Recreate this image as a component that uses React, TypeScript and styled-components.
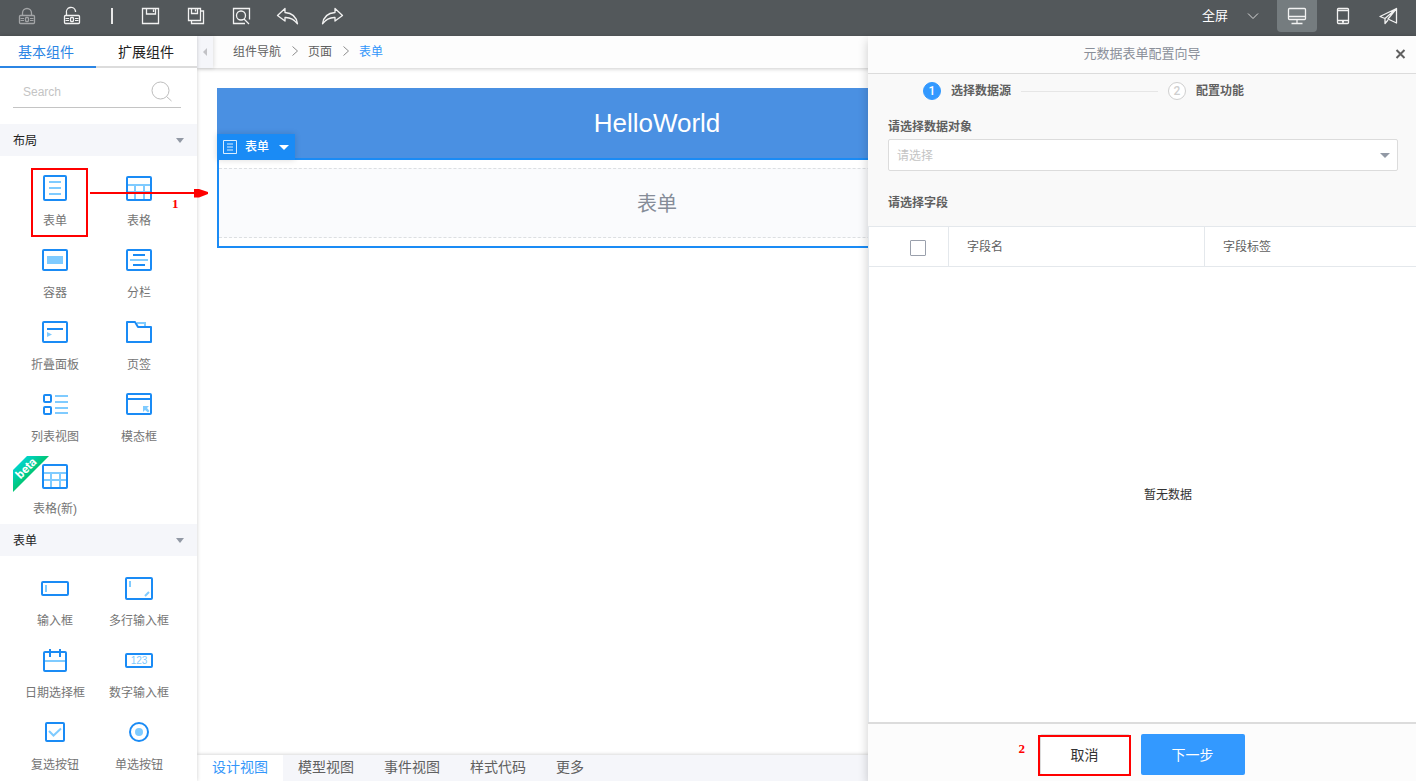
import React from "react";
import styled, { createGlobalStyle } from "styled-components";

const BLUE = "#1a8bf5";
const LIGHT = "#7fcbff";
const RED = "#ff0000";

const GlobalStyle = createGlobalStyle`
  *, *::before, *::after { box-sizing: border-box; }
  body {
    margin: 0;
    font-family: "Liberation Sans", "Noto Sans CJK SC", sans-serif;
    font-size: 12px;
    line-height: 16px;
    color: #666;
    background: #fff;
  }
  button, input, select { font: inherit; color: inherit; }
  button { border: 0; padding: 0; background: none; cursor: pointer; }
`;

const Page = styled.div`
  position: relative;
  display: flex;
  flex-direction: column;
  height: 100vh;
  overflow: hidden;
`;

/* ---------- toolbar ---------- */

const Toolbar = styled.header`
  display: flex;
  justify-content: space-between;
  flex: none;
  height: 36px;
  padding: 0 7px 4px 17px;
  background: #53585b;
  color: #fff;
`;

const ToolGroup = styled.div<{ $gap: number }>`
  display: flex;
  align-items: center;
  gap: ${(p) => p.$gap}px;
`;

const ToolButton = styled.button<{ $dim?: boolean }>`
  display: flex;
  width: 20px;
  height: 20px;
  opacity: ${(p) => (p.$dim ? 0.5 : 1)};
  svg { overflow: visible; }
`;

const ToolDivider = styled.span`
  display: flex;
  justify-content: center;
  width: 9px;
  &::before {
    content: "";
    width: 2px;
    height: 16px;
    background: #e8e8e8;
  }
`;

const DeviceButton = styled.button<{ $active?: boolean }>`
  display: flex;
  align-items: center;
  justify-content: center;
  width: 40px;
  height: 32px;
  border-radius: 0 0 4px 4px;
  background: ${(p) => (p.$active ? "#757c7f" : "transparent")};
`;

const ScreenPicker = styled.label`
  display: grid;
  align-items: center;
  width: 57px;
  margin-right: 12px;
  select, svg { grid-area: 1 / 1; }
  svg { justify-self: end; pointer-events: none; }
`;

const ScreenSelect = styled.select`
  appearance: none;
  width: 100%;
  padding: 0;
  border: 0;
  background: none;
  font-size: 13px;
  line-height: 20px;
  option { color: #333; }
`;

/* ---------- sidebar ---------- */

const Workspace = styled.div`
  position: relative;
  display: flex;
  flex: 1;
  min-height: 0;
`;

const Sidebar = styled.aside`
  position: relative;
  z-index: 1;
  flex: none;
  width: 197px;
  overflow: auto;
  scrollbar-width: none;
  background: #fff;
  box-shadow: 0 0 4px rgba(0, 0, 0, 0.2);
`;

const SideTabs = styled.div`
  display: grid;
  grid-template-columns: 96px 1fr;
`;

const SideTab = styled.button<{ $active?: boolean }>`
  height: 32px;
  padding: 2px 22px 0 18px;
  border-bottom: 2px solid ${(p) => (p.$active ? "#2b85e4" : "#dcdcdc")};
  color: ${(p) => (p.$active ? "#2b85e4" : "#222")};
  font-size: 14px;
  text-align: left;
  white-space: nowrap;
  & + & { padding: 2px 18px 0 22px; }
`;

const SearchBox = styled.label`
  display: flex;
  align-items: center;
  height: 34px;
  margin: 6px 16px 16px 13px;
  padding: 0 8px 0 10px;
  border-bottom: 1px solid #c4c4c4;
`;

const SearchInput = styled.input`
  flex: 1;
  min-width: 0;
  padding: 2px 0 0;
  border: 0;
  outline: 0;
  background: none;
  &::placeholder { color: #c4c4c4; }
`;

const SectionHead = styled.button`
  display: flex;
  align-items: center;
  justify-content: space-between;
  width: 100%;
  height: 32px;
  padding: 2px 13px 0;
  background: #f5f6fa;
  color: #222;
`;

const Caret = styled.span<{ $color: string }>`
  border: 5px solid transparent;
  border-top-color: ${(p) => p.$color};
  border-bottom-width: 0;
`;

const SectionCaret = styled(Caret)`
  border-width: 5px 4px 0;
  margin-bottom: 2px;
`;

const ItemGrid = styled.div`
  display: grid;
  grid-template-columns: 84px 84px;
  row-gap: 4px;
  padding: 12px 0 0 13px;
`;

const Item = styled.button`
  position: relative;
  display: flex;
  flex-direction: column;
  align-items: center;
  height: 68px;
  line-height: 26px;
  color: #757575;
  white-space: nowrap;
`;

const Ribbon = styled.svg`
  position: absolute;
  top: 0;
  left: 0;
  font: bold 12px/12px Roboto, sans-serif;
`;

/* ---------- editor ---------- */

const Editor = styled.main`
  display: flex;
  flex-direction: column;
  flex: 1;
  min-width: 0;
`;

const TopBar = styled.div`
  display: flex;
  height: 32px;
  flex: none;
  background: #fdfdfd;
  box-shadow: 0 1px 4px rgba(0, 0, 0, 0.2);
`;

const Collapse = styled.button`
  display: flex;
  align-items: center;
  justify-content: center;
  width: 16px;
  background: #f5f6fa;
  box-shadow: 1px 0 4px rgba(0, 0, 0, 0.12);
  &::before {
    content: "";
    border: 4px solid transparent;
    border-right-color: #c2c2c6;
    border-left-width: 0;
  }
`;

const Crumbs = styled.nav`
  display: flex;
  align-items: center;
  padding: 0 20px;
`;

const Crumb = styled.a<{ $current?: boolean }>`
  color: ${(p) => (p.$current ? "#3296fa" : "#606060")};
  text-decoration: none;
`;

const CrumbArrow = styled.svg`
  margin: 0 9px 2px 10px;
`;

const Canvas = styled.div`
  flex: 1;
  min-height: 0;
  margin-right: 299px;
  padding: 20px;
`;

const Hero = styled.h1`
  margin: 0;
  font-size: 26px;
  font-weight: 400;
  line-height: 70px;
  text-align: center;
  color: #fff;
  background: #4a90e2;
`;

const FormBlock = styled.section`
  position: relative;
  padding: 8px 0;
  border: 2px solid ${BLUE};
`;

const FormTag = styled.button`
  position: absolute;
  left: -2px;
  bottom: 100%;
  display: flex;
  align-items: center;
  width: 78px;
  height: 26px;
  padding-left: 6px;
  background: ${BLUE};
  color: #fff;
  font-weight: 500;
  box-shadow: 0 0 6px rgba(0, 0, 0, 0.15);
  svg { margin-right: 8px; }
  ${Caret} { margin-left: 10px; }
`;

const FormBody = styled.div`
  height: 70px;
  border: dashed #dcdfe2;
  border-width: 1px 0;
  background: #fafbfd;
  font-size: 20px;
  line-height: 70px;
  text-align: center;
  color: #858c98;
`;

const ViewTabs = styled.div`
  display: flex;
  flex: none;
  height: 26px;
  background: #f5f6fa;
  box-shadow: 0 -1px 3px rgba(0, 0, 0, 0.15);
`;

const ViewTab = styled.button<{ $active?: boolean }>`
  padding: 0 15px 2px;
  background: ${(p) => (p.$active ? "#fff" : "transparent")};
  color: ${(p) => (p.$active ? "#3296fa" : "#606060")};
  font-size: 14px;
`;

/* ---------- wizard drawer ---------- */

const Drawer = styled.section`
  position: absolute;
  z-index: 2;
  top: 0;
  right: 0;
  bottom: 0;
  display: flex;
  flex-direction: column;
  width: 548px;
  background: #f9f9f9;
  box-shadow: 0 4px 10px rgba(0, 0, 0, 0.2);
`;

const DrawerHead = styled.div`
  display: grid;
  grid-template-columns: 1fr auto 1fr;
  align-items: center;
  height: 38px;
  padding: 0 10px 2px;
  border-bottom: 1px solid #dcdcdc;
  background: #fcfcfc;
`;

const DrawerTitle = styled.h2`
  grid-column: 2;
  margin: 0;
  font-size: 13px;
  font-weight: 400;
  color: #8a8f99;
`;

const CloseButton = styled.button`
  display: flex;
  justify-self: end;
`;

const Steps = styled.ol`
  display: flex;
  align-items: center;
  height: 34px;
  margin: 0;
  padding: 0 55px;
  list-style: none;
`;

const Step = styled.li`
  display: flex;
  align-items: center;
  gap: 10px;
  font-weight: 700;
  color: #606060;
`;

const StepDot = styled.span<{ $active?: boolean }>`
  width: 18px;
  height: 18px;
  border: 1px solid ${(p) => (p.$active ? "#3399ff" : "#cfcfcf")};
  border-radius: 50%;
  background: ${(p) => (p.$active ? "#3399ff" : "#fff")};
  color: ${(p) => (p.$active ? "#fff" : "#cfcfcf")};
  font: 500 12px/16px Roboto, sans-serif;
  text-align: center;
`;

const StepLine = styled.li`
  width: 137px;
  height: 1px;
  margin: 0 10px;
  background: #e6e6e6;
`;

const Field = styled.label`
  display: grid;
  align-items: center;
  row-gap: 4px;
  padding: 11px 18px 0 20px;
  select { grid-area: 2 / 1; }
  ${Caret} { grid-area: 2 / 1; justify-self: end; margin-right: 8px; pointer-events: none; }
`;

const FieldLabel = styled.span`
  font-weight: 700;
  color: #606060;
`;

const FieldSelect = styled.select`
  appearance: none;
  width: 100%;
  height: 32px;
  padding: 2px 8px 0;
  border: 1px solid #dcdcdc;
  border-radius: 2px;
  background: #fff;
  color: #c4c4c4;
`;

const FieldsTitle = styled.h3`
  margin: 0;
  padding: 24px 20px 15px;
  font-size: 12px;
  color: #606060;
`;

const TableArea = styled.div`
  display: flex;
  flex-direction: column;
  flex: 1;
  min-height: 0;
  overflow: hidden;
  border: 1px solid #e4e8ec;
  border-width: 1px 0 0 1px;
  background: #fff;
`;

const FieldTable = styled.table`
  flex: none;
  width: 600px;
  table-layout: fixed;
  border-collapse: separate;
  border-spacing: 0;
`;

const HeadCell = styled.th<{ $width: number }>`
  width: ${(p) => p.$width}px;
  height: 40px;
  padding: 0 18px;
  border: 1px solid #e4e8ec;
  border-width: 0 1px 1px 0;
  font-weight: 400;
  text-align: left;
  color: #606060;
`;

const CheckCell = styled(HeadCell)`
  padding: 2px 0 0 18px;
  text-align: center;
`;

const CheckBox = styled.input`
  appearance: none;
  display: inline-block;
  width: 16px;
  height: 16px;
  margin: 0;
  border: 1px solid #9aa0ac;
  border-radius: 1px;
  background: #fff;
  vertical-align: middle;
`;

const Empty = styled.p`
  display: flex;
  flex: 1;
  align-items: center;
  justify-content: center;
  width: 598px;
  margin: 0;
  color: #333;
`;

const DrawerFoot = styled.footer`
  display: flex;
  justify-content: center;
  gap: 11px;
  flex: none;
  height: 59px;
  padding-top: 10px;
  border-top: 2px solid #dcdcdc;
  background: #fcfcfc;
`;

const FootButton = styled.button<{ $primary?: boolean }>`
  position: relative;
  height: 41px;
  padding: 0 ${(p) => (p.$primary ? 31 : 30)}px;
  border: ${(p) => (p.$primary ? "0" : "1px solid #dcdcdc")};
  border-radius: 2px;
  background: ${(p) => (p.$primary ? "#3399ff" : "#fff")};
  color: ${(p) => (p.$primary ? "#fff" : "#333")};
  font-size: 14px;
`;

/* ---------- walkthrough marks ---------- */

const MarkBox = styled.span<{ $top: number; $left: number; $w: number; $h: number }>`
  position: absolute;
  top: ${(p) => p.$top}px;
  left: ${(p) => p.$left}px;
  width: ${(p) => p.$w}px;
  height: ${(p) => p.$h}px;
  border: 2px solid ${RED};
`;

const MarkNumber = styled.span<{ $top: number; $left: number }>`
  position: absolute;
  z-index: 3;
  top: ${(p) => p.$top}px;
  left: ${(p) => p.$left}px;
  font: bold 13px/16px "Liberation Serif", serif;
  color: ${RED};
`;

const MarkArrow = styled.svg`
  position: absolute;
  z-index: 3;
  top: 151px;
  left: 89px;
  pointer-events: none;
`;

/* ---------- icons ---------- */

const icons: Record<string, React.ReactNode> = {
  form: (
    <>
      <rect x="9" y="8" width="22" height="24" rx="1" />
      <path stroke={LIGHT} d="M14 14h12M14 20h12M14 26h12" />
    </>
  ),
  table: (
    <>
      <path stroke={LIGHT} d="M9 17h22M9 24h22M16 17v14M25 17v14" />
      <rect x="8" y="9" width="24" height="23" rx="1" />
    </>
  ),
  container: (
    <>
      <rect x="8" y="10" width="24" height="20" rx="1" />
      <path fill={LIGHT} stroke="none" d="M12 16h16v8H12z" />
    </>
  ),
  columns: (
    <>
      <rect x="8" y="10" width="24" height="20" rx="1" />
      <path d="M14 15h12M14 25h12" />
      <path stroke={LIGHT} d="M11 20h18" />
    </>
  ),
  collapse: (
    <>
      <rect x="8" y="10" width="24" height="20" rx="1" />
      <path d="M12 17h16" />
      <path fill={LIGHT} stroke="none" d="M12 20l5 2.500l-5 2.500z" />
    </>
  ),
  tabs: (
    <>
      <path stroke={LIGHT} d="M18 11h8v4" />
      <path strokeLinejoin="round" d="M8 10h8l3 5h13v15H8z" />
    </>
  ),
  list: (
    <>
      <rect x="9" y="11" width="7" height="7" rx="1" />
      <rect x="9" y="23" width="7" height="7" rx="1" />
      <path stroke={LIGHT} d="M20 12h13M20 18h13M20 24h13M20 29h13" />
    </>
  ),
  modal: (
    <>
      <rect x="8" y="10" width="24" height="20" rx="1" />
      <path d="M8 15h24" />
      <path fill={LIGHT} stroke="none" d="M24 22h6l-2 2l2.500 3l-1.500 1.500l-3-2.500l-2 2z" />
    </>
  ),
  input: (
    <>
      <rect x="7" y="14" width="26" height="13" rx="1" />
      <path stroke={LIGHT} d="M11 17v7" />
    </>
  ),
  textarea: (
    <>
      <rect x="7" y="10" width="26" height="21" rx="1" />
      <path stroke={LIGHT} d="M11 13v6M26 28l4-4" />
    </>
  ),
  date: (
    <>
      <path stroke={LIGHT} d="M10 21h20" />
      <rect x="9" y="12" width="22" height="19" rx="1" />
      <path d="M15 9v8M25 9v8" />
    </>
  ),
  number: (
    <>
      <rect x="7" y="14" width="26" height="13" rx="1" />
      <text x="20" y="24" fontSize="10" textAnchor="middle" fill={LIGHT} stroke="none">
        123
      </text>
    </>
  ),
  checkbox: (
    <>
      <rect x="11" y="11" width="18" height="18" rx="1" />
      <path stroke={LIGHT} d="M14 19l4.500 4.500l7.500-7" />
    </>
  ),
  radio: (
    <>
      <circle cx="20" cy="20" r="9" />
      <circle cx="20" cy="20" r="4" fill={LIGHT} stroke="none" />
    </>
  ),
};

const ItemIcon = ({ name }: { name: string }) => (
  <svg width="40" height="40" fill="none" stroke={BLUE} strokeWidth="2" aria-hidden="true">
    {icons[name]}
  </svg>
);

const ToolIcon = ({ width = 20, children }: { width?: number; children: React.ReactNode }) => (
  <svg width={width} height="20" fill="none" stroke="#f2f2f2" strokeWidth="1.300" aria-hidden="true">
    {children}
  </svg>
);

const lockBody = (
  <>
    <rect x="2.500" y="9.500" width="15" height="8" rx="1" />
    <path d="M3.500 12.500h3.500M3.500 14.500h3.500M13 12.500h3.500M13 14.500h3.500" strokeWidth="1" />
    <rect x="8.500" y="11.500" width="3" height="4" rx="1" />
  </>
);

const tools = [
  { label: "锁定", dim: true, art: <>{lockBody}<path d="M5.500 9.500V7a4.500 4.500 0 0 1 9 0v2.500" /></> },
  { label: "解锁", art: <>{lockBody}<path d="M4.500 9.500V7a4.500 4.500 0 0 1 9-2v1" /></> },
  null,
  { label: "保存", art: <path d="M1.500 2.500h16v15h-16zM5.500 2.500v5.500h9V2.500M12.500 3.500v2.500" /> },
  {
    label: "全部保存",
    art: <path d="M2.500 2.500h12v12h-12zM5.500 2.500v5h6v-5M9.500 3.500v2M14.500 5h3v12.500h-12v-3" />,
  },
  {
    label: "预览",
    art: <><path d="M14 17.500h-11.500v-15h16v11" /><circle cx="10" cy="9.500" r="4.500" /><path d="M13 13l5 5" /></>,
  },
  {
    label: "撤销",
    art: <path strokeLinejoin="round" d="M9 2.500L1.500 9.500L9 15v-3.500c5-.2 9 1.500 12.500 6.300C20.500 11 16 7 9 6.500z" />,
  },
  {
    label: "重做",
    art: <path strokeLinejoin="round" d="M14 2.500L21.500 9.500L14 15v-3.500c-5-.2-9 1.500-12.500 6.300C2.500 11 7 7 14 6.500z" />,
  },
];

const layoutItems = [
  { icon: "form", label: "表单", marked: true },
  { icon: "table", label: "表格" },
  { icon: "container", label: "容器" },
  { icon: "columns", label: "分栏" },
  { icon: "collapse", label: "折叠面板" },
  { icon: "tabs", label: "页签" },
  { icon: "list", label: "列表视图" },
  { icon: "modal", label: "模态框" },
  { icon: "table", label: "表格(新)", beta: true },
];

const formItems = [
  { icon: "input", label: "输入框" },
  { icon: "textarea", label: "多行输入框" },
  { icon: "date", label: "日期选择框" },
  { icon: "number", label: "数字输入框" },
  { icon: "checkbox", label: "复选按钮" },
  { icon: "radio", label: "单选按钮" },
];

type Entry = { icon: string; label: string; marked?: boolean; beta?: boolean };

const Section = ({ title, items }: { title: string; items: Entry[] }) => (
  <section>
    <SectionHead>
      {title}
      <SectionCaret $color="#9299a5" />
    </SectionHead>
    <ItemGrid>
      {items.map((item) => (
        <Item key={item.label}>
          <ItemIcon name={item.icon} />
          {item.label}
          {item.beta && (
            <Ribbon width="36" height="36">
              <defs>
                <linearGradient id="ribbon" x1="0" y1="0" x2="1" y2="1">
                  <stop offset="0.150" stopColor="#00d5d5" />
                  <stop offset="0.550" stopColor="#00c468" />
                </linearGradient>
              </defs>
              <path fill="url(#ribbon)" d="M14 0h22L0 36V14z" />
              <text transform="translate(16 15) rotate(-45)" textAnchor="middle" fill="#fff">
                beta
              </text>
            </Ribbon>
          )}
          {item.marked && <MarkBox $top={0} $left={18} $w={57} $h={69} />}
        </Item>
      ))}
    </ItemGrid>
  </section>
);

const Chevron = () => (
  <CrumbArrow width="8" height="12" fill="none" stroke="#8c8c8c" aria-hidden="true">
    <path d="M1.500 1.500l5 4.500l-5 4.500" />
  </CrumbArrow>
);

export default function App() {
  return (
    <Page>
      <GlobalStyle />
      <Toolbar>
        <ToolGroup $gap={25}>
          {tools.map((tool, i) =>
            tool ? (
              <ToolButton key={tool.label} $dim={tool.dim} aria-label={tool.label}>
                <ToolIcon>{tool.art}</ToolIcon>
              </ToolButton>
            ) : (
              <ToolDivider key={i} />
            )
          )}
        </ToolGroup>
        <ToolGroup $gap={6}>
          <ScreenPicker>
            <ScreenSelect aria-label="屏幕">
              <option>全屏</option>
            </ScreenSelect>
            <svg width="12" height="8" fill="none" stroke="#d8d8d8" aria-hidden="true">
              <path d="M1 1.500l5 5l5-5" />
            </svg>
          </ScreenPicker>
          <DeviceButton $active aria-label="桌面">
            <ToolIcon>
              <rect x="1.500" y="2.500" width="17" height="11" rx="1" />
              <path d="M1.500 10.500h17M10 13.500v4M4.500 17.500h11" />
            </ToolIcon>
          </DeviceButton>
          <DeviceButton aria-label="手机">
            <ToolIcon>
              <rect x="4.500" y="2.500" width="11" height="15" rx="1" />
              <path d="M4.500 4.500h11M4.500 14.500h11M9 16h2" />
            </ToolIcon>
          </DeviceButton>
          <DeviceButton aria-label="发布">
            <ToolIcon>
              <path strokeLinejoin="round" d="M17.500 2.500L1 10.500l5 2v5l3-3.500M6 12.500L17.500 2.500v14.500l-8.500-4l8.500-10.500" />
            </ToolIcon>
          </DeviceButton>
        </ToolGroup>
      </Toolbar>

      <Workspace>
        <Sidebar>
          <SideTabs>
            <SideTab $active>基本组件</SideTab>
            <SideTab>扩展组件</SideTab>
          </SideTabs>
          <SearchBox>
            <SearchInput placeholder="Search" aria-label="Search" />
            <svg width="22" height="22" fill="none" stroke="#bdbdbd" aria-hidden="true">
              <circle cx="9.500" cy="10.500" r="8.500" />
              <path d="M15.500 16.500l5 4.500" />
            </svg>
          </SearchBox>
          <Section title="布局" items={layoutItems} />
          <Section title="表单" items={formItems} />
        </Sidebar>

        <Editor>
          <TopBar>
            <Collapse aria-label="收起" />
            <Crumbs>
              <Crumb href="#nav">组件导航</Crumb>
              <Chevron />
              <Crumb href="#page">页面</Crumb>
              <Chevron />
              <Crumb href="#form" $current>表单</Crumb>
            </Crumbs>
          </TopBar>
          <Canvas>
            <Hero>HelloWorld</Hero>
            <FormBlock>
              <FormTag>
                <svg width="14" height="14" fill="none" stroke="#fff" aria-hidden="true">
                  <path d="M.500.500h13v13H.500z" opacity="0.850" />
                  <path d="M4 4h6M4 7h6M4 10h6" opacity="0.850" />
                </svg>
                表单
                <Caret $color="#fff" />
              </FormTag>
              <FormBody>表单</FormBody>
            </FormBlock>
          </Canvas>
          <ViewTabs>
            <ViewTab $active>设计视图</ViewTab>
            <ViewTab>模型视图</ViewTab>
            <ViewTab>事件视图</ViewTab>
            <ViewTab>样式代码</ViewTab>
            <ViewTab>更多</ViewTab>
          </ViewTabs>
        </Editor>

        <Drawer>
          <DrawerHead>
            <DrawerTitle>元数据表单配置向导</DrawerTitle>
            <CloseButton aria-label="关闭">
              <svg width="11" height="10" stroke="#606060" strokeWidth="2" aria-hidden="true">
                <path d="M1.500 1l8 8M9.500 1l-8 8" />
              </svg>
            </CloseButton>
          </DrawerHead>
          <Steps>
            <Step>
              <StepDot $active>1</StepDot>
              选择数据源
            </Step>
            <StepLine aria-hidden="true" />
            <Step>
              <StepDot>2</StepDot>
              配置功能
            </Step>
          </Steps>
          <Field>
            <FieldLabel>请选择数据对象</FieldLabel>
            <FieldSelect>
              <option>请选择</option>
            </FieldSelect>
            <Caret $color="#9299a5" />
          </Field>
          <FieldsTitle>请选择字段</FieldsTitle>
          <TableArea>
            <FieldTable>
              <thead>
                <tr>
                  <CheckCell $width={80}>
                    <CheckBox type="checkbox" aria-label="全选" />
                  </CheckCell>
                  <HeadCell $width={256}>字段名</HeadCell>
                  <HeadCell $width={264}>字段标签</HeadCell>
                </tr>
              </thead>
            </FieldTable>
            <Empty>暂无数据</Empty>
          </TableArea>
          <DrawerFoot>
            <FootButton>
              取消
              <MarkBox $top={0} $left={-3} $w={93} $h={41} />
              <MarkNumber $top={6} $left={-22}>2</MarkNumber>
            </FootButton>
            <FootButton $primary>下一步</FootButton>
          </DrawerFoot>
        </Drawer>

        <MarkArrow width="120" height="12" aria-hidden="true">
          <path stroke={RED} strokeWidth="2" d="M1 6h105" />
          <path fill={RED} d="M105 2h5l9 3v2l-9 3.500h-5z" />
        </MarkArrow>
        <MarkNumber $top={160} $left={172}>1</MarkNumber>
      </Workspace>
    </Page>
  );
}
